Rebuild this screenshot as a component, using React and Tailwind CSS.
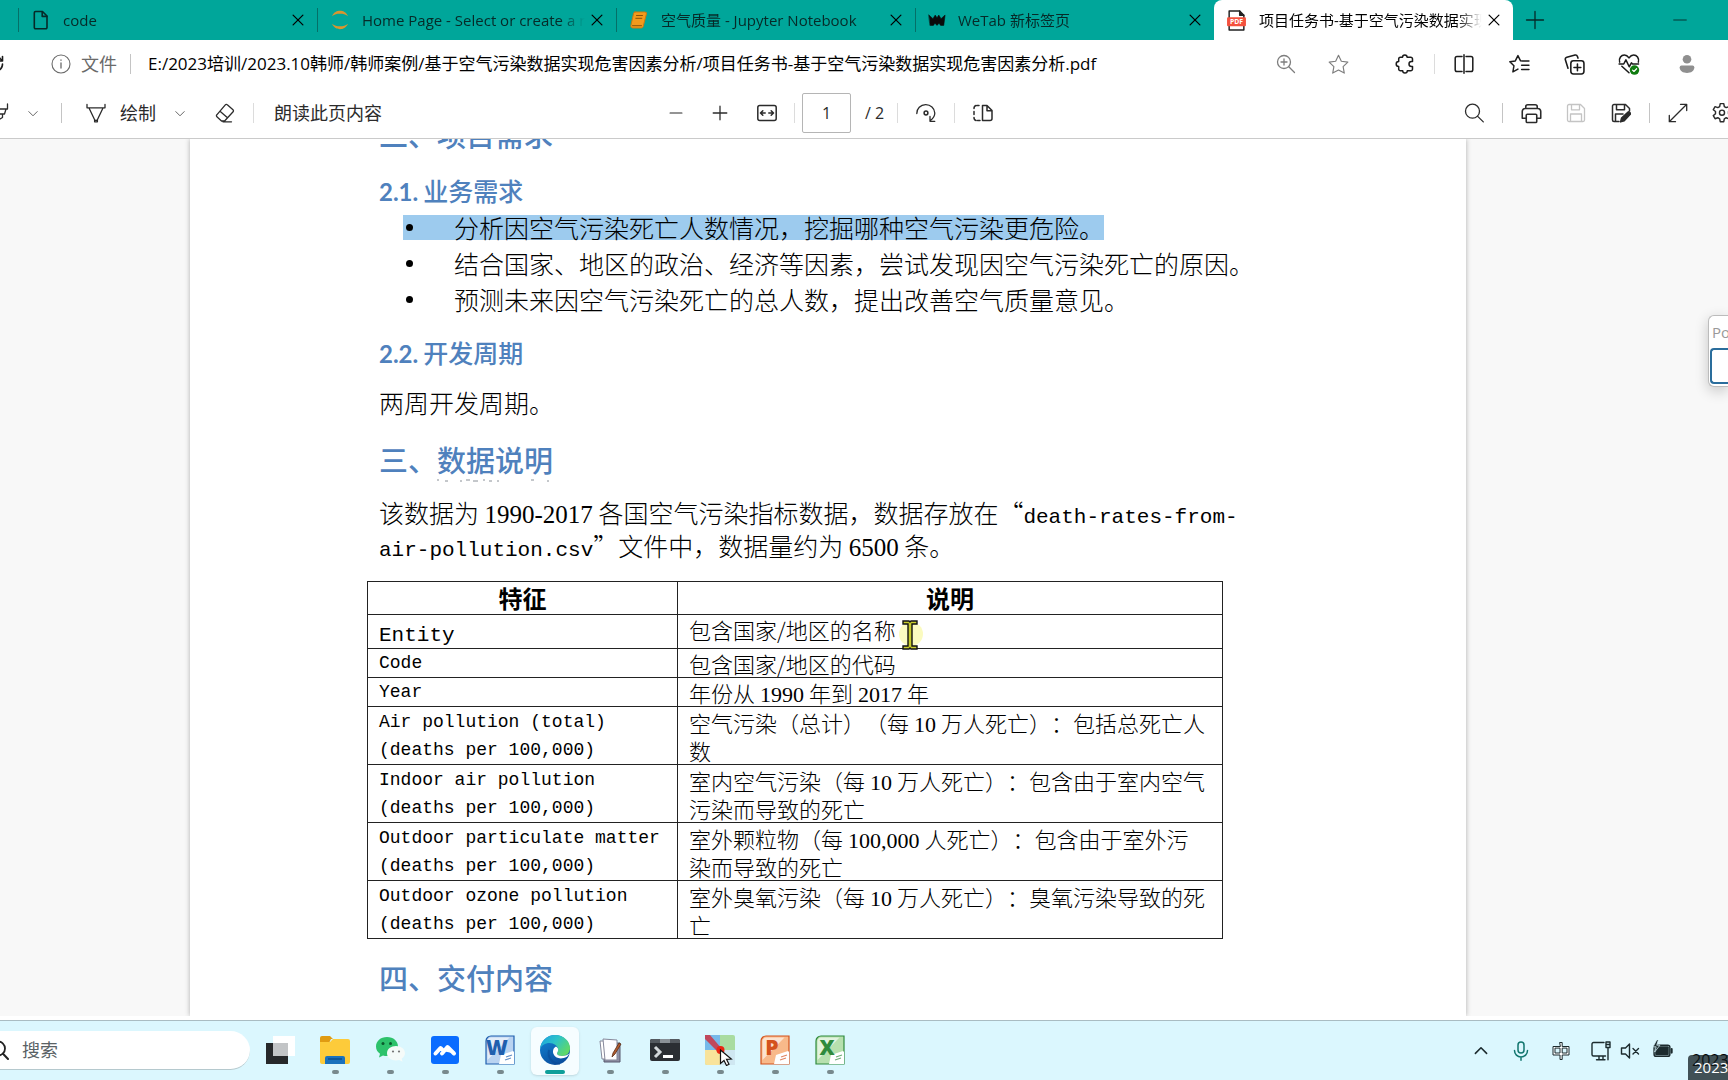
import { useState } from 'react';

const Icon = ({ size = 20, className = '', children }) => (
  <svg
    width={size}
    height={size}
    viewBox="0 0 20 20"
    fill="none"
    stroke="currentColor"
    strokeWidth="1.3"
    strokeLinecap="round"
    strokeLinejoin="round"
    className={`shrink-0 ${className}`}
    aria-hidden="true"
  >
    {children}
  </svg>
);

const IconButton = ({ label, className = '', children }) => (
  <button type="button" aria-label={label} className={`flex h-8 w-8 shrink-0 items-center justify-center ${className}`}>
    {children}
  </button>
);

const Separator = ({ className = '' }) => <span className={`h-5 w-px shrink-0 bg-[#c4c4c4] ${className}`} />;

const Chevron = () => (
  <button type="button" aria-label="更多" className="flex h-8 w-5 shrink-0 items-center justify-center text-[#555]">
    <Icon size={14}>
      <path d="M4 8l6 6 6-6" />
    </Icon>
  </button>
);

const FileIcon = () => (
  <Icon>
    <path d="M4.5 1.5h7l4.5 4.5v11.5a1.2 1.2 0 0 1-1.2 1.2H4.5a1.2 1.2 0 0 1-1.2-1.2V2.7a1.2 1.2 0 0 1 1.2-1.2z" strokeWidth="1.6" />
    <path d="M11.2 1.8v4.6h4.6" strokeWidth="1.6" />
  </Icon>
);

const JupyterIcon = () => (
  <Icon>
    <path d="M2 6.2C4 2 7 .8 10 .8s6 1.2 8 5.400C15.500 4.300 13 3.700 10 3.700S4.500 4.300 2 6.200z" fill="#d9962f" stroke="none" />
    <path d="M2 13.800c2 4.200 5 5.400 8 5.400s6-1.200 8-5.400c-2.500 1.900-5 2.500-8 2.500s-5.500-.6-8-2.500z" fill="#d9962f" stroke="none" />
  </Icon>
);

const BookIcon = () => (
  <Icon>
    <path d="M6 2h10a1.500 1.500 0 0 1 1.400 2l-3.200 12.500A2 2 0 0 1 12.300 18H3.800a2 2 0 0 1-1.900-2.600L4.700 3A1.500 1.500 0 0 1 6 2z" fill="#f39a1d" stroke="#c77a12" strokeWidth="1" />
    <path d="M7.500 5.500h6M6.800 8.300h6M3.500 15.700h9" stroke="#8a5208" strokeWidth="1" />
  </Icon>
);

const WeTabIcon = () => (
  <Icon size={18}>
    <path d="M1 4.500l4.500 4L8 4.500l2 3 2-3 2.500 4 4.500-4-1.500 11.500H14l-1.700-2.500L10 16l-2.300-2.500L6 16H2.500z" fill="#0a0a0a" stroke="#0a0a0a" strokeWidth=".6" />
  </Icon>
);

const PdfIcon = () => (
  <Icon size={21}>
    <path d="M3 1h10l4 4v14H3z" fill="#fff" stroke="#222" strokeWidth="1.4" />
    <path d="M13 1v4h4" fill="#222" stroke="#222" />
    <rect x="1" y="7" width="18" height="8.500" rx="1" fill="#f4513d" stroke="none" />
    <text x="10" y="13.600" textAnchor="middle" fontSize="6.500" fontWeight="700" fontFamily="Open Sans, sans-serif" fill="#fff" stroke="none">PDF</text>
  </Icon>
);

const tabs = [
  { title: 'code', icon: <FileIcon /> },
  { title: 'Home Page - Select or create a notebook', icon: <JupyterIcon /> },
  { title: '空气质量 - Jupyter Notebook', icon: <BookIcon /> },
  { title: 'WeTab 新标签页', icon: <WeTabIcon /> },
  { title: '项目任务书-基于空气污染数据实现危害因素分析.pdf', icon: <PdfIcon />, active: true },
];

const TabBar = () => (
  <header className="flex h-10 shrink-0 bg-[#00a69a] pl-[18px] text-[#062a28]">
    {tabs.map((tab) => (
      <div
        key={tab.title}
        className={
          tab.active
            ? 'flex w-[299px] items-center rounded-t-lg bg-white pr-[9px] pl-3 text-black'
            : 'flex w-[299px] items-center pr-[9px]'
        }
      >
        {!tab.active && <span className="h-6 w-px bg-[#057068]" />}
        <button type="button" className={`flex min-w-0 flex-1 items-center gap-3 text-left ${tab.active ? '' : 'pl-3'}`}>
          {tab.icon}
          <span className="min-w-0 flex-1 overflow-hidden text-[15px] leading-6 whitespace-nowrap [mask-image:linear-gradient(to_right,black_88%,transparent_99%)]">
            {tab.title}
          </span>
        </button>
        <button type="button" aria-label="关闭标签页" className="flex h-6 w-5 items-center justify-center">
          <Icon size={14} className="text-black">
            <path d="M3 3l14 14M17 3L3 17" strokeWidth="1.800" />
          </Icon>
        </button>
      </div>
    ))}
    <button type="button" aria-label="新建标签页" className="ml-1.5 flex w-8 items-center justify-center">
      <Icon>
        <path d="M10 1.500v17M1.500 10h17" />
      </Icon>
    </button>
    <button type="button" aria-label="最小化" className="mr-8 ml-auto flex w-8 items-center justify-center">
      <Icon size={14}>
        <path d="M1 10h18" />
      </Icon>
    </button>
  </header>
);

const AddressBar = () => (
  <div className="flex h-12 shrink-0 items-center overflow-hidden text-[#1b1b1b]">
    <IconButton label="刷新" className="-ml-[21px]">
      <Icon>
        <path d="M17.500 10a7.500 7.500 0 1 1-2.200-5.300L17.500 7M17.500 2.500V7H13" strokeWidth="1.600" />
      </Icon>
    </IconButton>
    <button type="button" className="ml-10 flex items-center gap-[10px] text-lg text-[#6a6a6a]">
      <Icon>
        <circle cx="10" cy="10" r="9" strokeWidth="1.100" />
        <path d="M10 9v5M10 6v.3" />
      </Icon>
      文件
    </button>
    <Separator className="mr-[17px] ml-[13px] bg-[#8a8a8a]" />
    <input
      aria-label="地址"
      className="min-w-0 flex-1 bg-transparent text-[17px] text-black outline-none"
      defaultValue="E:/2023培训/2023.10韩师/韩师案例/基于空气污染数据实现危害因素分析/项目任务书-基于空气污染数据实现危害因素分析.pdf"
    />
    <div className="mr-[35px] flex gap-5 text-[#7d7d7d]">
      <IconButton label="缩放">
        <Icon>
          <circle cx="8" cy="8" r="6.500" />
          <path d="M12.800 12.800L18.500 18.500M8 5v6M5 8h6" />
        </Icon>
      </IconButton>
      <IconButton label="收藏">
        <Icon size={21}>
          <path d="M10 1.200l2.700 5.700 6.200.8-4.500 4.300 1.100 6.200L10 15.200l-5.500 3 1.100-6.200L1.100 7.700l6.200-.8z" strokeWidth="1.100" />
        </Icon>
      </IconButton>
    </div>
    <IconButton label="扩展">
      <Icon>
        <path d="M7.500 3.200a2.300 2.300 0 0 1 4.600 0h3.600a1.800 1.800 0 0 1 1.800 1.800v2.500h-1a2.500 2.500 0 0 0 0 5h1V15a1.800 1.800 0 0 1-1.800 1.800h-3.400a2.300 2.300 0 0 1-4.600 0H5.500A1.800 1.800 0 0 1 3.700 15v-2.500a2.500 2.500 0 0 1 0-5V5a1.800 1.800 0 0 1 1.800-1.800z" strokeWidth="1.500" />
      </Icon>
    </IconButton>
    <Separator className="mx-[13px] bg-[#dcdcdc]" />
    <div className="flex gap-[23px] pr-[25px]">
      <IconButton label="拆分屏幕">
        <Icon>
          <path d="M8 2.500H3A1.800 1.800 0 0 0 1.200 4.300v11.400A1.800 1.800 0 0 0 3 17.500h5M12 2.500h5a1.800 1.800 0 0 1 1.800 1.800v11.400a1.800 1.800 0 0 1-1.800 1.800h-5M10 .8v18.400" strokeWidth="1.500" />
        </Icon>
      </IconButton>
      <IconButton label="收藏夹">
        <Icon size={21}>
          <path d="M13 6.700l-2-.2L8.500 1.500 6 6.600l-5.200.8 3.900 3.800-1 5.800 4.800-2.600M13.500 6.700h5.500M12 10.700h7M12 14.700h7" strokeWidth="1.400" />
        </Icon>
      </IconButton>
      <IconButton label="集锦">
        <Icon size={21}>
          <rect x="6.500" y="6.500" width="12.500" height="12.500" rx="2.500" strokeWidth="1.500" />
          <path d="M12.800 9.500v6.500M9.500 12.800H16M3.800 13.500L1.300 5.500a2 2 0 0 1 1.400-2.500l7.800-2a2 2 0 0 1 2.300 1.300l.5 1.600" strokeWidth="1.500" />
        </Icon>
      </IconButton>
      <IconButton label="浏览器概要">
        <Icon size={22}>
          <path d="M1.500 8.300C.5 4.500 3 1.800 5.800 1.800c2 0 3.200 1.200 4.200 2.600 1-1.400 2.200-2.600 4.200-2.600 2.800 0 5.300 2.700 4.300 6.500M3.500 12l6.500 6M1 10h4.200l2-3.700 3 6.200 2-3.500 1 1h5.500" strokeWidth="1.400" />
          <circle cx="15" cy="15.500" r="4.300" fill="#107c10" stroke="none" />
          <path d="M13.200 15.600l1.300 1.200 2.400-2.500" stroke="#fff" strokeWidth="1.100" />
        </Icon>
      </IconButton>
      <IconButton label="个人资料" className="ml-[3px]">
        <Icon className="text-[#8f8f8f]">
          <circle cx="10" cy="5.200" r="4.300" fill="currentColor" stroke="none" />
          <path d="M4.500 11.500h11a1.800 1.800 0 0 1 1.800 1.800c0 4-3.300 5.700-7.300 5.700s-7.300-1.700-7.300-5.700a1.800 1.800 0 0 1 1.800-1.800z" fill="currentColor" stroke="none" />
        </Icon>
      </IconButton>
    </div>
  </div>
);

const PdfToolbar = () => {
  const [page, setPage] = useState('1');

  return (
    <div className="flex h-[51px] shrink-0 items-center overflow-hidden border-b border-[#cacaca] text-lg text-[#2b2b2b]">
      <IconButton label="突出显示" className="-ml-[17px]">
        <Icon>
          <path d="M1 1v5h17.500V1M3.500 6l1 5h11l1.500-5M6.500 11v7.500l7-4V11" />
        </Icon>
      </IconButton>
      <span className="w-2" />
      <Chevron />
      <Separator className="mx-[18px]" />
      <button type="button" className="flex items-center gap-2">
        <span className="flex w-8 justify-center">
          <Icon>
            <path d="M1 1.500v3.300h18V1.500M3 5l5.500 11.500a1.700 1.700 0 0 0 3 0L17 5M8.600 16.500v2.300h2.800v-2.300" />
          </Icon>
        </span>
        绘制
      </button>
      <span className="w-[14px]" />
      <Chevron />
      <IconButton label="橡皮擦" className="ml-[19px]">
        <Icon>
          <path d="M12.300 1.700l5.700 5a1.400 1.400 0 0 1 .1 2L9.600 18H6.500l-4.600-4.200a1.400 1.400 0 0 1-.1-2l8.500-10a1.400 1.400 0 0 1 2-.1zM5 8.300l7.500 6.500M8 18.800h8.500" />
        </Icon>
      </IconButton>
      <Separator className="ml-3 bg-[#dcdcdc]" />
      <button type="button" className="ml-5">朗读此页内容</button>

      <IconButton label="缩小" className="ml-[278px]">
        <Icon size={14}>
          <path d="M1.500 10h17" strokeWidth="1.600" />
        </Icon>
      </IconButton>
      <IconButton label="放大" className="ml-3">
        <Icon size={16}>
          <path d="M10 1.500v17M1.500 10h17" strokeWidth="1.600" />
        </Icon>
      </IconButton>
      <IconButton label="适应宽度" className="ml-[15px]">
        <Icon>
          <rect x=".8" y="2.500" width="18.400" height="15" rx="2" strokeWidth="1.500" />
          <path d="M5.800 7.700L3.500 10l2.300 2.300M14.200 7.700L16.500 10l-2.300 2.300M3.700 10h4.500M11.800 10h4.500" strokeWidth="1.500" />
        </Icon>
      </IconButton>
      <Separator className="ml-[11px] bg-[#dcdcdc]" />
      <input
        aria-label="页码"
        value={page}
        onChange={(e) => setPage(e.target.value)}
        className="ml-[7px] h-10 w-[49px] shrink-0 rounded-xs border border-[#b5b5b5] text-center text-base outline-none"
      />
      <span className="ml-[14px] text-base whitespace-nowrap">/ 2</span>
      <Separator className="ml-[13px] bg-[#dcdcdc]" />
      <IconButton label="旋转" className="ml-3">
        <Icon>
          <path d="M.8 10.500A9 8.700 0 0 1 18.800 10c0 3-1.600 5.500-4.500 7.500M14 13.500v4.800h4.800" />
          <circle cx="10" cy="10" r="1.900" strokeWidth="1.500" />
        </Icon>
      </IconButton>
      <Separator className="ml-3 bg-[#dcdcdc]" />
      <IconButton label="页面视图" className="ml-3">
        <Icon>
          <path d="M6 2.500H4M1 5.500a3 3 0 0 1 2-3M1 8.500v3M1 14.500a3 3 0 0 0 2 3M4.500 17.500H7M9.500 2.500h4.500l5 5v8a2 2 0 0 1-2 2H9.500zM14 2.800v4.900h4.800" strokeWidth="1.500" />
        </Icon>
      </IconButton>

      <IconButton label="查找" className="ml-auto">
        <Icon>
          <circle cx="8.500" cy="8.200" r="7" />
          <path d="M13.700 13.400l5.600 5.500" />
        </Icon>
      </IconButton>
      <Separator className="mx-3" />
      <div className="flex gap-[13px]">
        <IconButton label="打印">
          <Icon size={21}>
            <path d="M4.500 5V3.700a2 2 0 0 1 2-2h7a2 2 0 0 1 2 2V5M5 14.500H1.200V8A2.700 2.700 0 0 1 3.900 5.300h12.200A2.700 2.700 0 0 1 18.800 8v6.500H15" strokeWidth="1.500" />
            <rect x="5" y="10.700" width="10" height="7.800" rx="1" strokeWidth="1.500" />
          </Icon>
        </IconButton>
        <IconButton label="保存" className="text-[#c4c4c4]">
          <Icon>
            <path d="M3 1.500h11.500l4 4V17a1.500 1.500 0 0 1-1.500 1.500H3A1.500 1.500 0 0 1 1.500 17V3A1.500 1.500 0 0 1 3 1.500zM5.500 1.800v5h8v-5M4.500 18v-7h11v7" />
          </Icon>
        </IconButton>
        <IconButton label="另存为">
          <Icon>
            <path d="M8 18.500H3A1.500 1.500 0 0 1 1.500 17V3A1.500 1.500 0 0 1 3 1.500h11.500l4 4V8M5.500 1.800v5h8v-5M4.500 18v-7H12" strokeWidth="1.500" />
            <path d="M9.500 19l1-4 6.500-6c1-.8 3.300 1 2.300 2.300l-6 6.500z" fill="currentColor" />
          </Icon>
        </IconButton>
      </div>
      <Separator className="mx-3" />
      <IconButton label="全屏">
        <Icon>
          <path d="M1.500 18.500l17-17M12.500 1.300h6.200v6.200M1.300 12.500v6.200h6.200" />
        </Icon>
      </IconButton>
      <IconButton label="设置" className="-mr-[10px] ml-3">
        <Icon size={22}>
          <path d="M8.400 1.500h3.200l.5 2.600 1.700 1 2.500-.9 1.600 2.800-2 1.700v2l2 1.700-1.600 2.800-2.500-.9-1.700 1-.5 2.600H8.400l-.5-2.600-1.700-1-2.500.9-1.600-2.800 2-1.700v-2l-2-1.700 1.600-2.800 2.500.9 1.700-1z" />
          <circle cx="10" cy="9.700" r="2.300" />
        </Icon>
      </IconButton>
    </div>
  );
};

const requirements = [
  { text: '分析因空气污染死亡人数情况，挖掘哪种空气污染更危险。', selected: true },
  { text: '结合国家、地区的政治、经济等因素，尝试发现因空气污染死亡的原因。' },
  { text: '预测未来因空气污染死亡的总人数，提出改善空气质量意见。' },
];

const features = [
  { name: 'Code', desc: '包含国家/地区的代码' },
  { name: 'Year', desc: ['年份从', '1990', '年到', '2017', '年'] },
  { name: 'Air pollution (total) (deaths per 100,000)', desc: ['空气污染（总计）（每', '10', '万人死亡）：包括总死亡人数'], tall: true },
  { name: 'Indoor air pollution (deaths per 100,000)', desc: ['室内空气污染（每', '10', '万人死亡）：包含由于室内空气污染而导致的死亡'], tall: true },
  { name: 'Outdoor particulate matter (deaths per 100,000)', desc: ['室外颗粒物（每', '100,000', '人死亡）：包含由于室外污染而导致的死亡'], tall: true },
  { name: 'Outdoor ozone pollution (deaths per 100,000)', desc: ['室外臭氧污染（每', '10', '万人死亡）：臭氧污染导致的死亡'], tall: true },
];

const Num = ({ className = '', children }) => (
  <span className={`font-['Liberation_Serif',serif] leading-none ${className}`}>{children}</span>
);

const Mono = ({ children }) => (
  <span className="font-['Liberation_Mono',monospace] text-[21px] leading-none">{children}</span>
);

// Odd entries are numbers set in the serif face
const Description = ({ parts }) => {
  if (typeof parts === 'string') return parts;
  return parts.map((part, i) => (i % 2 ? <Num key={i} className="mx-[5px]">{part}</Num> : part));
};

const Heading = ({ className = '', children }) => (
  <h2 className={`pl-3 text-[29px] leading-10 font-medium text-[#4f81bd] ${className}`}>{children}</h2>
);

const SubHeading = ({ number, className = '', children }) => (
  <h3 className={`pl-3 text-[25px] leading-8 font-medium text-[#4f81bd] ${className}`}>
    <span className="mr-[5px] font-['Lato',sans-serif] text-2xl leading-none font-bold">{number}</span>
    {children}
  </h3>
);

const FeatureTable = () => (
  <table className="w-full table-fixed border-collapse border border-[#222] text-[22px] leading-7 font-light text-black">
    <colgroup>
      <col className="w-[310px]" />
      <col />
    </colgroup>
    <thead>
      <tr className="h-[33px] text-2xl leading-8">
        <th className="border border-[#222] font-bold">特征</th>
        <th className="border border-[#222] font-bold">说明</th>
      </tr>
    </thead>
    <tbody>
      <tr className="h-[34px]">
        <td className="border border-[#222] px-[11px]"><Mono>Entity</Mono></td>
        <td className="relative border border-[#222] px-[11px] align-top">
          包含国家/地区的名称
          <svg className="absolute top-0 left-[217px]" width="30" height="36" viewBox="0 0 30 36" aria-hidden="true">
            <circle cx="16" cy="19" r="12" fill="#fbfbc0" />
            <path d="M8 6h6l1 1 1-1h6v3h-5v22h5v3h-6l-1-1-1 1H8v-3h5V9H8z" fill="#c8cc2c" stroke="#111" strokeWidth="1.400" />
          </svg>
        </td>
      </tr>
      {features.map((feature) => (
        <tr key={feature.name} className={feature.tall ? 'h-[58px]' : 'h-[29px]'}>
          <td className="border border-[#222] px-[11px] font-['Liberation_Mono',monospace] text-lg leading-7">{feature.name}</td>
          <td className="border border-[#222] pr-4 pl-[11px]"><Description parts={feature.desc} /></td>
        </tr>
      ))}
    </tbody>
  </table>
);

const Viewer = () => (
  <main className="relative flex min-h-0 flex-1 overflow-hidden bg-[#f8f8f8]">
    <article className="mr-[262px] ml-[190px] min-w-0 flex-1 bg-white pr-[221px] pl-[177px] font-['Noto_Sans_CJK_SC',sans-serif] text-[25px] font-light text-black shadow-[0_0_5px_rgba(0,0,0,0.3)] [text-spacing-trim:space-all]">
      <Heading className="-mt-[25px]">二、项目需求</Heading>
      <SubHeading number="2.1." className="mt-5">业务需求</SubHeading>
      <ul className="mt-[3px] pl-9">
        {requirements.map((item) => (
          <li key={item.text} className="flex h-9 items-center">
            <span className={`flex h-[25px] items-center leading-[23px] whitespace-nowrap ${item.selected ? 'bg-[#9dcbee]' : ''}`}>
              <span className="mr-[41px] ml-[3px] h-[7px] w-[7px] rounded-full bg-black" />
              {item.text}
            </span>
          </li>
        ))}
      </ul>
      <SubHeading number="2.2." className="mt-[19px]">开发周期</SubHeading>
      <p className="mt-[18px] pl-3 leading-[33px]">两周开发周期。</p>
      <Heading className="mt-5">三、数据说明</Heading>
      <svg className="ml-[68px] block text-[#8a9097]" width="120" height="3" viewBox="0 0 120 3" fill="none" stroke="currentColor" aria-hidden="true">
        <path d="M2 1h2M10 2h3M25 2h2M31 1h4M38 2h5M48 1h2M54 2h3M62 2h2M96 1h3M112 2h2" />
      </svg>
      <p className="mt-[14px] pl-3 leading-[33px]">
        该数据为 <Num>1990-2017</Num> 各国空气污染指标数据，数据存放在“<Mono>death-rates-from-air-pollution.csv</Mono>”文件中，数据量约为 <Num>6500</Num> 条。
      </p>
      <div className="mt-[19px] pr-[22px]">
        <FeatureTable />
      </div>
      <Heading className="mt-[18px]">四、交付内容</Heading>
    </article>
    <aside className="absolute top-[176px] right-0 w-5 overflow-hidden rounded-l-md border border-r-0 border-[#bcbcbc] bg-white pb-0.5 pl-px shadow-[0_4px_14px_rgba(0,0,0,0.2)]">
      <p className="pl-0.5 text-[15px] leading-8 text-[#999]">Po</p>
      <div className="h-9 rounded-l-sm border-2 border-r-0 border-[#2a6d9c]" />
    </aside>
  </main>
);

const TaskViewIcon = () => (
  <svg width="32" height="32" viewBox="0 0 32 32" aria-hidden="true">
    <rect x="2" y="9" width="22" height="21" fill="#26282a" />
    <rect x="9" y="2" width="22" height="20" fill="#fff" />
    <path d="M9 9h15v13H9z" fill="#c2c4c6" />
  </svg>
);

const FolderIcon = () => (
  <svg width="32" height="32" viewBox="0 0 32 32" aria-hidden="true">
    <path d="M1 4a2 2 0 0 1 2-2h8l3 3h-2l-2 4H1z" fill="#e09b12" />
    <path d="M1 8h10l3-3h15a2 2 0 0 1 2 2v21a2 2 0 0 1-2 2H3a2 2 0 0 1-2-2z" fill="#fdcb3a" />
    <path d="M6 30v-6a2 2 0 0 1 2-2h16a2 2 0 0 1 2 2v6z" fill="#1a72bd" />
    <path d="M9 25h14" stroke="#0c4f8c" strokeWidth="1.500" />
  </svg>
);

const WeChatIcon = () => (
  <svg width="32" height="32" viewBox="0 0 32 32" aria-hidden="true">
    <path d="M13 3C6.500 3 2 7.200 2 12.500c0 3 1.500 5.600 4 7.300L5 23.500l4-2c1.300.4 2.600.5 4 .5 6.500 0 11-4.200 11-9.500S19.500 3 13 3z" fill="#2dc26b" />
    <circle cx="9" cy="9.500" r="1.500" fill="#0a5a2c" />
    <circle cx="16.500" cy="9.500" r="1.500" fill="#0a5a2c" />
    <path d="M22 12c-5 0-9 3-9 7.300s4 7.200 9 7.200c1.100 0 2.200-.2 3.200-.5l3.300 1.700-.8-3c2-1.300 3.300-3.200 3.300-5.400 0-4.300-4-7.300-9-7.300z" fill="#f5fbf9" />
    <circle cx="19" cy="17.500" r="1.100" fill="#777" />
    <circle cx="25" cy="17.500" r="1.100" fill="#777" />
  </svg>
);

const MeetingIcon = () => (
  <svg width="32" height="32" viewBox="0 0 32 32" aria-hidden="true">
    <rect x="2" y="2" width="28" height="28" rx="3" fill="#0a6cff" />
    <path d="M6.500 19.500l5-5.500 2.500 2.500M13 19.500l5.500-6.500 6.500 6.500" fill="none" stroke="#fff" strokeWidth="4" strokeLinecap="round" strokeLinejoin="round" />
    <path d="M16 17.500l2.500-3.200 3.500 4.500z" fill="#fff" />
  </svg>
);

const OfficeIcon = ({ letter, color, tint }) => (
  <svg width="32" height="32" viewBox="0 0 32 32" aria-hidden="true">
    <path d="M7 2h23v28H2V7a5 5 0 0 1 5-5z" fill={tint} stroke={color} strokeWidth="1.200" />
    <path d="M3.500 8a4 4 0 0 1 4-4.500h18L3.500 26z" fill="#fff" opacity=".6" />
    <path d="M17 21l12-4 1 1v12H15z" fill="#fff" />
    <path d="M22 23l6-2M21 26l6-2" stroke={color} strokeWidth="1.100" opacity=".7" />
    <text x="13" y="21" textAnchor="middle" fontSize="21" fontWeight="800" fontFamily="Open Sans, sans-serif" fill={color}>{letter}</text>
  </svg>
);

const EdgeIcon = () => (
  <svg width="32" height="32" viewBox="0 0 32 32" aria-hidden="true">
    <defs>
      <linearGradient id="edgeTop" x1="0" y1="0" x2="1" y2="0.600">
        <stop offset="0" stopColor="#1b9de2" />
        <stop offset="0.500" stopColor="#2cc3c9" />
        <stop offset="1" stopColor="#5fd868" />
      </linearGradient>
      <linearGradient id="edgeBase" x1="0" y1="0" x2="0.500" y2="1">
        <stop offset="0" stopColor="#1489d8" />
        <stop offset="1" stopColor="#0b4f9f" />
      </linearGradient>
    </defs>
    <circle cx="16" cy="16" r="15" fill="url(#edgeBase)" />
    <path d="M1 15C2 6.500 8.500 1 16 1c8.500 0 15 6 15 13 0 5-3.500 8-8 8-3 0-5-1-5-2.500 0-1 1.200-1.600 1.200-3.700C19.200 12 15 9 10.500 9 6 9 2.500 11.500 1 15z" fill="url(#edgeTop)" />
    <path d="M17 12.500c-3 1.500-3.500 5-2.500 7.500 1.500 4 7 6 13.500 2.800L31 19c-2 2-5 3-8 3s-5-1-5-2.500c0-1 1.200-1.600 1.200-3.700 0-1.300-.8-2.500-2.200-3.300z" fill="#fff" />
    <path d="M10 16c-2 8 4 14 11 14" fill="none" stroke="#0a4592" strokeWidth="2" opacity=".5" />
  </svg>
);

const NotesIcon = () => (
  <svg width="32" height="32" viewBox="0 0 32 32" aria-hidden="true">
    <path d="M10 9h16v19H10z" fill="#8f90a5" stroke="#56586c" />
    <path d="M6 7h14v18H8z" fill="#fff" stroke="#85879a" />
    <path d="M9 5l14 1v20H11z" fill="#fdfdff" stroke="#85879a" />
    <path d="M25 9l-6 10-1 4 3-3 6-10z" fill="#b15a2e" stroke="#5c2e16" strokeWidth=".8" />
  </svg>
);

const TerminalIcon = () => (
  <svg width="32" height="32" viewBox="0 0 32 32" aria-hidden="true">
    <rect x="1" y="5" width="30" height="22" rx="2" fill="#2b2e33" />
    <path d="M1 9V7a2 2 0 0 1 2-2h8v4zM21 5h8a2 2 0 0 1 2 2v2H21z" fill="#54595f" />
    <path d="M11 5h10v4H11z" fill="#8b9197" />
    <path d="M6 13l5 5-5 5" fill="none" stroke="#d3d7da" strokeWidth="3" />
    <path d="M14 22.500h10" stroke="#fff" strokeWidth="3" />
  </svg>
);

const PointerIcon = () => (
  <svg width="32" height="32" viewBox="0 0 32 32" aria-hidden="true">
    <rect x="1" y="1" width="30" height="30" rx="2" fill="#a9dca0" />
    <path d="M1 1h15v15H1z" fill="#76b9ea" />
    <path d="M1 16h15v15H3a2 2 0 0 1-2-2z" fill="#f8e39b" />
    <path d="M16 16h15v15H16z" fill="#cfe7f1" />
    <path d="M1 1h5l12 14-4 3L1 5z" fill="#c0485c" />
    <circle cx="16.500" cy="16" r="4" fill="#ea2613" />
    <path d="M16.500 16v13.500l3.500-3 2.500 5 2.500-1.200-2.500-5 4.800-.3z" fill="#fff" stroke="#111" strokeWidth="1.200" />
  </svg>
);

const apps = [
  { name: '任务视图', icon: <TaskViewIcon /> },
  { name: '文件资源管理器', icon: <FolderIcon />, running: true },
  { name: '微信', icon: <WeChatIcon />, running: true },
  { name: '腾讯会议', icon: <MeetingIcon />, running: true },
  { name: 'Word', icon: <OfficeIcon letter="W" color="#1f5fae" tint="#b9d3f1" />, running: true },
  { name: 'Edge', icon: <EdgeIcon />, running: true, active: true },
  { name: '便笺', icon: <NotesIcon />, running: true },
  { name: '终端', icon: <TerminalIcon />, running: true },
  { name: '画笔', icon: <PointerIcon />, running: true },
  { name: 'PowerPoint', icon: <OfficeIcon letter="P" color="#d4521c" tint="#f8b98a" />, running: true },
  { name: 'Excel', icon: <OfficeIcon letter="X" color="#2f8a3c" tint="#b7e0ae" />, running: true },
];

const Taskbar = () => (
  <footer className="relative mt-1 flex h-[60px] shrink-0 items-center overflow-hidden border-t border-[#a9bcc2] bg-[#dbf7fe]">
    <label className="flex h-[39px] w-[250px] items-center overflow-hidden rounded-r-full border-b border-[#b5c9ce] bg-white">
      <Icon className="-ml-[11px] text-[#222]">
        <circle cx="9" cy="8.500" r="7" strokeWidth="1.800" />
        <path d="M14 13.800l5 5.200" strokeWidth="2" />
      </Icon>
      <input
        type="text"
        aria-label="搜索"
        placeholder="搜索"
        className="ml-[13px] w-full bg-transparent text-lg outline-none placeholder:text-[#5a6265]"
      />
    </label>
    <nav className="ml-1.5 flex gap-[7px]">
      {apps.map((app) => (
        <button
          key={app.name}
          type="button"
          aria-label={app.name}
          className={`flex h-12 w-12 flex-col items-center rounded-md pt-[7px] ${app.active ? 'bg-[#f6fdff] shadow-sm' : ''}`}
        >
          {app.icon}
          {app.running && (
            <span className={app.active ? 'mt-1 h-1 w-5 shrink-0 rounded-full bg-[#0f9f9a]' : 'mt-1 h-1 w-[7px] shrink-0 rounded-full bg-[#78898d]'} />
          )}
        </button>
      ))}
    </nav>
    <div className="mr-[50px] ml-auto flex items-center text-[#1c2b2e]">
      <IconButton label="显示隐藏的图标">
        <Icon size={16}>
          <path d="M3 13l7-7 7 7" strokeWidth="2" />
        </Icon>
      </IconButton>
      <IconButton label="麦克风" className="ml-2 text-[#12766e]">
        <Icon>
          <rect x="7" y="1" width="6" height="11" rx="3" strokeWidth="1.500" />
          <path d="M3.500 9.500a6.500 6.500 0 0 0 13 0M10 16v3.200" strokeWidth="1.500" />
        </Icon>
      </IconButton>
      <IconButton label="输入法" className="ml-2">
        <Icon>
          <path d="M9 1.500h2.200v4H18v8.500h-6.800v4.500H9V14H2V5.500h7zM4 7.500V12h5V7.500zM11.200 7.500V12H16V7.500z" strokeWidth="1" fill="#fff" fillRule="evenodd" />
        </Icon>
      </IconButton>
      <IconButton label="网络" className="ml-2">
        <Icon>
          <path d="M13 1.500H2.500A1.500 1.500 0 0 0 1 3v10.500A1.500 1.500 0 0 0 2.500 15h12M8 15v3.500M12 15v3.500M5.500 18.700H14M15 1h4v5.500h-4zM17 6.500v12.300M15 3.500h4" strokeWidth="1.400" />
        </Icon>
      </IconButton>
      <IconButton label="静音" className="-ml-[3px]">
        <Icon>
          <path d="M9.500 3L5.500 7H1.500v6h4l4 4zM13 7.500l5.500 5.500M18.500 7.500L13 13" strokeWidth="1.400" />
        </Icon>
      </IconButton>
      <IconButton label="电池">
        <Icon size={21}>
          <rect x="2" y="5" width="15" height="10.500" rx="2" strokeWidth="1.400" />
          <rect x="3" y="6" width="13" height="8.500" rx="1" fill="currentColor" stroke="none" />
          <path d="M18.700 8.500v3.500" strokeWidth="2" />
          <path d="M4.500 0L1 6.500h3L2.500 11.500 7.500 5h-3l1.500-5z" fill="currentColor" stroke="#dbf7fe" strokeWidth=".7" />
        </Icon>
      </IconButton>
    </div>
    <p className="absolute right-0 bottom-2 w-9 text-base leading-6 whitespace-nowrap text-black">2023/</p>
    <div className="absolute right-0 bottom-0 h-[25px] w-10 overflow-hidden rounded-tl-sm bg-[#0e1a1e]/75 pl-[6px] text-[15px] leading-6 whitespace-nowrap text-white">
      2023/
    </div>
  </footer>
);

const App = () => (
  <div className="flex h-screen flex-col overflow-hidden bg-white font-['Open_Sans','Noto_Sans_CJK_SC',sans-serif]">
    <TabBar />
    <AddressBar />
    <PdfToolbar />
    <Viewer />
    <Taskbar />
  </div>
);

export default App;
